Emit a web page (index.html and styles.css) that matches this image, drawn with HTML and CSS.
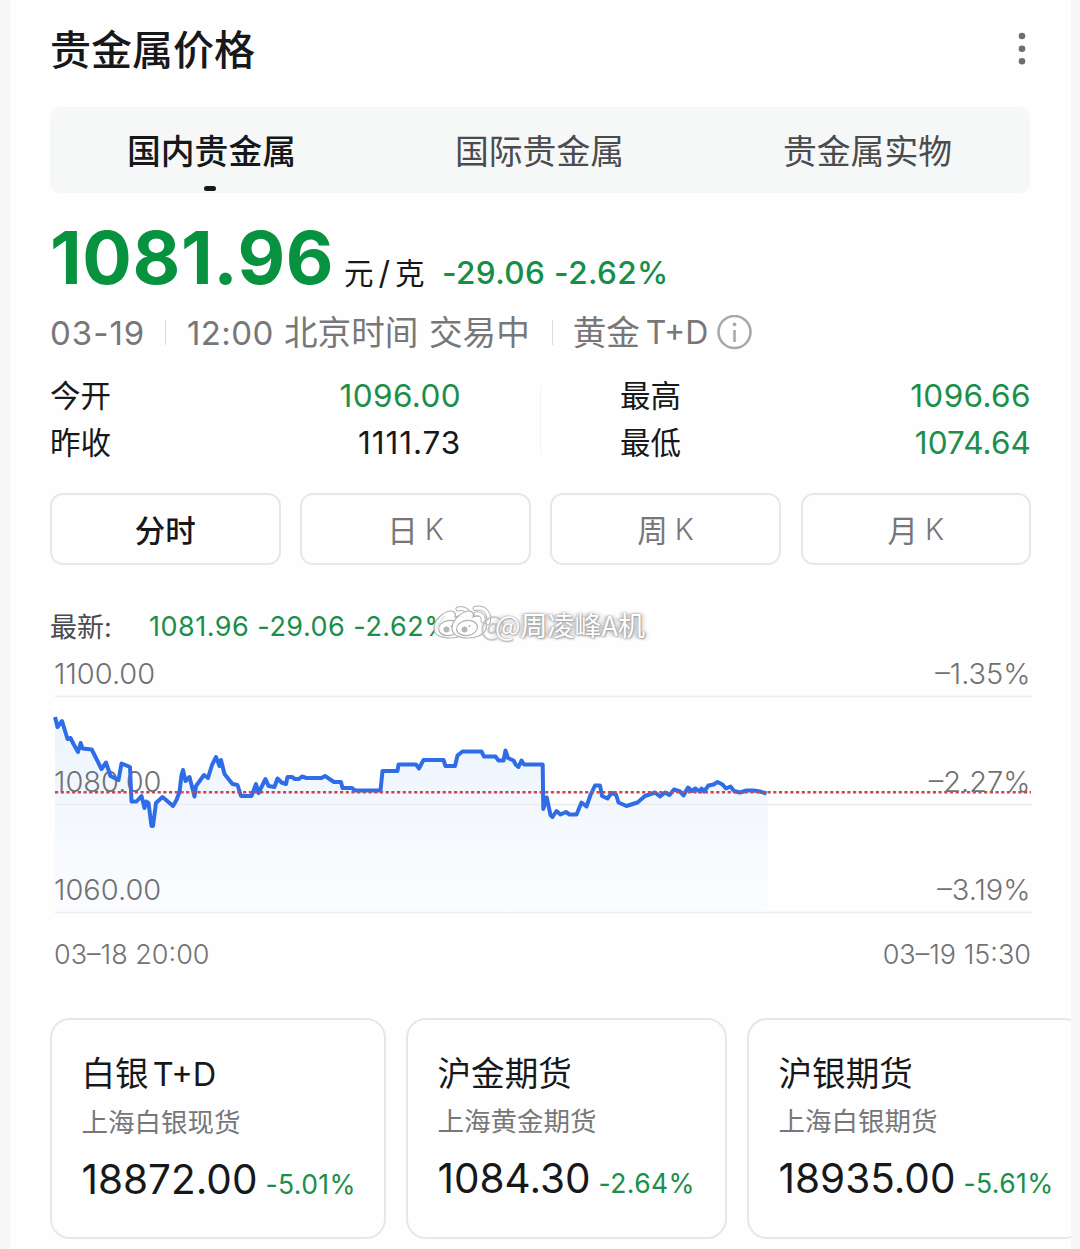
FILE: index.html
```html
<!DOCTYPE html>
<html lang="zh-CN">
<head>
<meta charset="utf-8">
<title>贵金属价格</title>
<link rel="stylesheet" href="styles.css">
</head>
<body>
<main class="panel">
  <header class="head">
    <h1 class="title">贵金属价格</h1>
    <svg class="more" width="8" height="34" viewBox="0 0 8 34"><circle cx="4" cy="4" r="3.3"/><circle cx="4" cy="16.7" r="3.3"/><circle cx="4" cy="29.3" r="3.3"/></svg>
  </header>

  <nav class="tabs">
    <span class="tab active">国内贵金属</span>
    <span class="tab">国际贵金属</span>
    <span class="tab">贵金属实物</span>
  </nav>

  <section class="quote">
    <span class="price">1081.96</span>
    <span class="unit">元<i>/</i>克</span>
    <span class="change">-29.06 -2.62%</span>
  </section>

  <section class="meta">
    <span class="date">03-19</span>
    <span class="bar"></span>
    <span class="clock">12:00</span>
    <span class="cn zone">北京时间</span>
    <span class="cn">交易中</span>
    <span class="bar second"></span>
    <span class="cn gold">黄金</span>
    <span class="td">T+D</span>
    <svg class="info" width="36" height="36" viewBox="0 0 36 36"><circle cx="17.500" cy="17" r="16"/><path d="M17.500 15v12"/><circle class="dot" cx="17.500" cy="9.300" r="1.9"/></svg>
  </section>

  <section class="stats">
    <dl class="stat-col">
      <dt>今开</dt><dd class="down">1096.00</dd>
      <dt>昨收</dt><dd class="ones">1111.73</dd>
    </dl>
    <span class="stat-line"></span>
    <dl class="stat-col">
      <dt>最高</dt><dd class="down">1096.66</dd>
      <dt>最低</dt><dd class="down low">1074.64</dd>
    </dl>
  </section>

  <nav class="periods">
    <span class="period active">分时</span>
    <span class="period">日<b>K</b></span>
    <span class="period">周<b>K</b></span>
    <span class="period">月<b>K</b></span>
  </nav>

  <section class="latest">
    <span class="latest-label">最新:</span>
    <span class="latest-value">1081.96 -29.06 -2.62%</span>
    <div class="mark">
      <svg class="mark-logo" width="66" height="38" viewBox="0 0 66 38">
        <defs>
          <g id="eye">
            <path d="M2 23C2 15 12 6 19 6c4 0 5 3 4 6 5-2 10-1 9 4 4 1 5 4 4 8-2 6-10 9-18 9C9 33 2 30 2 23Z"/>
            <ellipse cx="17" cy="23" rx="10.500" ry="7.500" transform="rotate(-9 17 23)"/>
            <circle class="pupil" cx="14.500" cy="24.500" r="3"/>
            <circle class="pupil" cx="19.500" cy="21" r="1"/>
          </g>
        </defs>
        <use href="#eye"/>
        <path class="wave-edge" d="M26 4c7-2 12 3 11 10"/>
        <path class="wave" d="M26 4c7-2 12 3 11 10"/>
        <use href="#eye" x="18"/>
        <path class="wave-edge" d="M43 3.500c9-2 16 5 13 14M44 9c5-1 8 3 7 7"/>
        <path class="wave" d="M43 3.500c9-2 16 5 13 14M44 9c5-1 8 3 7 7"/>
      </svg>
      <span class="mark-name"><i class="at">@</i>周凌峰A机</span>
    </div>
  </section>

  <svg class="chart" width="984" height="330" viewBox="50 650 984 330">
    <defs>
      <linearGradient id="area" x1="0" y1="717" x2="0" y2="912" gradientUnits="userSpaceOnUse">
        <stop offset="0" stop-color="#ebf4fd"/><stop offset=".5" stop-color="#f4f8fd"/><stop offset="1" stop-color="#fbfcfe"/>
      </linearGradient>
    </defs>
    <path fill="url(#area)" d="M55 717L62 721 67.500 739 78 752 92 749.500 101.500 769 106 762 118 780 121.500 763.500 130 767 131.500 801 144 803 152 826 156 803 173 806 179 792 183 770 194.500 796 204 775 217 757 224 774 241 796 251 796 265 779 287 777 321 778 334 782 355 790.500H380.500L382.500 771H397.500L398.500 764.500H416L423.500 760H443.500L445.500 766H455L462.500 751.500H481.500L498.500 760.500 513 760.500 518 765 542.700 764 543.300 809 552 817 576 814 595 785.500 602 796 626 806 655 792.500 717 782 740 792 768 793V912H55Z"/>
    <g class="grid"><path d="M55 696.500H1032M55 804.500H1032M55 912.500H1032"/></g>
    <g class="axis">
      <text x="54" y="684">1100.00</text><text x="54" y="792">1080.00</text><text x="54" y="900">1060.00</text>
      <text class="end" x="1030.500" y="684">–1.35%</text><text class="end" x="1030.500" y="792">–2.27%</text><text class="end" x="1030.500" y="900">–3.19%</text>
      <text class="time" x="54" y="964">03–18 20:00</text><text class="time end" x="1031" y="964">03–19 15:30</text>
    </g>
    <path class="trend" d="M55 717L57.500 727 62 721 67.500 739 70.500 738 73.500 744 78 752 80.700 743 82.500 748.500 91.700 749.500 95.500 757 101.500 769 106 762.500 110.500 776 118.500 780 121.500 763.500 130 767 131.500 801.500 136.500 801.500 141.500 796 144.500 808 146 801.500 148.500 803 151.500 826 153 826 156 803 162.500 797 173 806 176.500 800 179.500 792 181.500 775 183 770 185.500 781 189.500 777 194.500 796.500 196 786 204 775 208 778 212 765 216 757 219.500 766 221 760 224.500 774 228.500 779 232.500 784 237.500 785 241 796 251.500 796 256 784 258.500 793 265.500 779 268.500 786 274.500 787 277.500 778.500 281.500 782.500 286 784 287.500 777 292 777 295 779 299 779 302 776.500 306.500 778 321.500 778 325 776 329.500 779 334 782 341 782 342.500 788 352 788 355 790.500 380.500 790.500 382.500 771 397.500 771 398.500 764.500 416 764.500 419 768.500 423.500 760 443.500 760 445.500 766 455 766 457.500 755.500 462.500 751.500 481.500 751.500 484 756.500 495.500 756.500 498.500 760.500 503.500 760.500 505.500 750.500 508 758 513.500 760.500 516 765 518.500 767 521.500 760.500 524 764.500 542.700 764.500 543.300 809 546.700 797.500 550.500 815 552.500 817 556.500 811 560.500 814.500 566 812 569.500 814.500 576.500 814.500 581.500 802.500 586.500 806.500 590.500 795 595 785.500 600 785.500 602 796 607.500 798.500 611.500 793 616 794.500 618.500 802.500 626.500 806 637.500 802.500 645 796 655 792.500 660 796.500 665 792.500 669.500 795 674 789.500 680 791.500 683.500 795.500 688 787.500 692 791 695.500 788.500 699.500 791.500 701.500 788.500 704 791.500 708.500 785.500 713.500 784.500 717.500 782 722.500 784.500 726 788.500 730.500 786.500 734 791 740 792.500 746.500 790.500 753.500 790.500 760 791.500 766.500 793.500"/>
    <path class="ref" d="M55 792.300H1031"/>
  </svg>

  <section class="cards">
    <article class="card first">
      <h2 class="name">白银<b>T+D</b></h2>
      <p class="desc">上海白银现货</p>
      <p class="row"><span class="num">18872.00</span><span class="pct">-5.01%</span></p>
    </article>
    <article class="card">
      <h2 class="name">沪金期货</h2>
      <p class="desc">上海黄金期货</p>
      <p class="row"><span class="num">1084.30</span><span class="pct">-2.64%</span></p>
    </article>
    <article class="card last">
      <h2 class="name">沪银期货</h2>
      <p class="desc">上海白银期货</p>
      <p class="row"><span class="num">18935.00</span><span class="pct">-5.61%</span></p>
    </article>
  </section>
</main>
</body>
</html>
```
FILE: styles.css
```css
* { box-sizing: border-box; margin: 0; padding: 0; }
body {
  height: 1249px;
  overflow: hidden;
  background: #f7f7f8;
  color: #17181a;
  font-family: Inter, "Noto Sans CJK SC", sans-serif;
  white-space: nowrap;
}
b, i { font-weight: inherit; font-style: normal; }
.panel {
  width: 1061px;
  height: 1249px;
  margin-left: 10px;
  padding-left: 40px;
  background: #fefefe;
  overflow: hidden;
}
.head {
  display: flex;
  justify-content: space-between;
  align-items: center;
  width: 976px;
  height: 107px;
  padding-bottom: 9px;
}
.title { padding-top: 1px; font-size: 41px; font-weight: 500; line-height: 60px; }
.more { fill: #6d6d6f; }

.tabs {
  display: grid;
  grid-template-columns: repeat(3, 328px);
  justify-content: center;
  width: 980px;
  height: 86px;
  border-radius: 10px;
  background: #f6f7f7;
}
.tab {
  display: flex;
  flex-direction: column;
  align-items: center;
  padding: 20px 1px 0 0;
  font-size: 33.800px;
  line-height: 50px;
  color: #4a4b4e;
}
.tab.active { color: #17181a; font-weight: 500; }
.tab.active::after {
  content: "";
  width: 12px;
  height: 5px;
  margin: 9px 3px 0 0;
  border-radius: 3px;
  background: #17181a;
}

.quote { display: flex; align-items: baseline; height: 116px; line-height: 130px; }
.price { width: 294px; font-size: 73.500px; font-weight: 700; letter-spacing: .6px; color: #07923f; }
.unit { width: 98px; font-size: 29.500px; }
.unit i { margin: 0 5px; font-size: 32px; }
.change { font-size: 31.500px; font-weight: 500; letter-spacing: .4px; color: #158f47; }

.meta { display: flex; align-items: center; height: 47px; color: #777779; font-size: 32px; }
.date { width: 115px; font-size: 33px; letter-spacing: 1px; }
.bar { width: 1px; height: 25px; margin-right: 21px; background: #dcdcde; }
.clock { width: 97px; font-size: 33px; letter-spacing: .4px; }
.cn { font-size: 33.600px; line-height: 46px; }
.zone { width: 145px; }
.bar.second { margin: 0 20px 0 22px; }
.gold { width: 73px; }
.td { width: 71px; }
.info { fill: none; stroke: #a9a9ab; stroke-width: 2.600; }
.info .dot { fill: #a9a9ab; stroke: none; }

.stats { display: flex; justify-content: space-between; width: 980px; height: 137px; padding-top: 17px; }
.stat-col {
  display: grid;
  grid-template-columns: auto auto;
  grid-template-rows: 46.500px 46.500px;
  justify-content: space-between;
  align-items: center;
  width: 410px;
  height: 93px;
  font-size: 31.500px;
}
.stat-col dt { font-size: 30.500px; line-height: 46px; }
.stat-col dd { margin-right: -1px; padding-bottom: 1px; text-align: right; letter-spacing: .4px; }
.stat-col .ones { letter-spacing: .9px; }
.stat-col .low { letter-spacing: .1px; }
.stat-line { width: 1px; height: 68px; margin-top: 13px; background: #f3f3f4; }
.down { color: #1b8f4a; }

.periods { display: grid; grid-template-columns: repeat(4, 230.500px); gap: 19.700px; height: 72px; }
.period {
  display: flex;
  align-items: center;
  justify-content: center;
  gap: 7px;
  padding-bottom: 1px;
  border: 2px solid #e7e7e8;
  border-radius: 13px;
  font-size: 30.500px;
  color: #77777a;
}
.period b { padding-top: 1px; font-size: 29.500px; font-weight: 350; }
.period.active { color: #17181a; font-weight: 500; }

.latest {
  position: relative;
  display: flex;
  align-items: center;
  height: 47px;
  margin-top: 38px;
  font-size: 27px;
}
.latest-label { width: 99px; padding-bottom: 3px; color: #4a4b4e; }
.latest-value { letter-spacing: .5px; color: #1b8f4a; }
.mark { position: absolute; left: 382px; top: -1px; width: 220px; height: 44px; }
.mark-logo { position: absolute; left: 0; top: 3px; fill: #fff; fill-opacity: .85; stroke: #b2b2b4; stroke-width: 1.200; }
.mark-logo .pupil { fill: #aaa; stroke: none; }
.mark-logo .wave-edge { fill: none; stroke: #b2b2b4; stroke-width: 5; stroke-linecap: round; }
.mark-logo .wave { fill: none; stroke: #fff; stroke-width: 3; stroke-linecap: round; }
.mark-name {
  position: absolute;
  left: 63px;
  top: 2px;
  font-family: "Noto Sans CJK SC", sans-serif;
  font-size: 27px;
  line-height: 42px;
  color: #fff;
  text-shadow: 0 0 2px #8d8d8f, 1px 1px 2px #aaa, -3px 0 3px #bdbdbf, 3px 0 4px #d0d0d2;
}
.mark-name .at { text-shadow: 0 0 2px #8d8d8f, 1px 1px 2px #aaa, -15px 0 1px #c0c0c2, -4px 0 4px #d0d0d2; }

.chart { display: block; }
.grid { stroke: #ebecee; stroke-width: 1.500; }
.axis { font-size: 29px; font-weight: 350; fill: #717174; }
.axis .time { font-size: 27px; }
.axis .end { text-anchor: end; }
.trend { fill: none; stroke: #2f6de8; stroke-width: 4; stroke-linejoin: round; }
.ref { stroke: #c64853; stroke-width: 2.400; stroke-dasharray: 3.200 2.500; }

.cards { display: flex; gap: 20px; margin-top: 38px; }
.card {
  flex: none;
  width: 321px;
  height: 221px;
  padding: 28px 0 0 29.500px;
  border: 2px solid #e6e7e8;
  border-radius: 20px;
}
.card.first { width: 336px; }
.card.last { width: 337px; }
.name { font-size: 33.600px; font-weight: 400; line-height: 52px; }
.name b { margin-left: 4px; font-size: 32.500px; }
.desc { font-size: 26.500px; line-height: 42px; color: #77777a; }
.row { display: flex; align-items: baseline; gap: 8px; line-height: 74px; }
.num { font-size: 40.500px; }
.pct { font-size: 26.500px; letter-spacing: .4px; color: #1b8f4a; }
```
